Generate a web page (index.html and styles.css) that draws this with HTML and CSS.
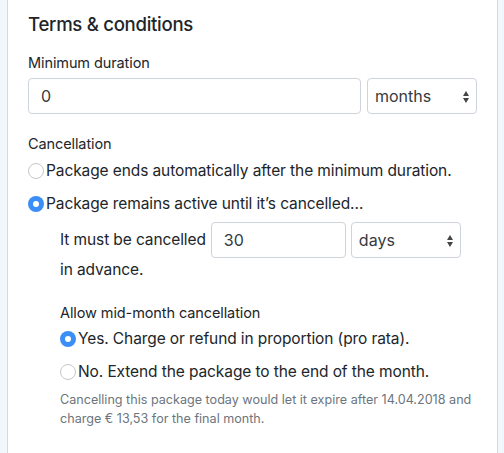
FILE: index.html
```html
<!DOCTYPE html>
<html>
<head>
<meta charset="utf-8">
<link rel="stylesheet" href="styles.css">
</head>
<body>
<div class="card">
  <h2 class="title">Terms &amp; conditions</h2>

  <div class="field">
    <div class="label">Minimum duration</div>
    <div class="row">
      <div class="input wide">0</div>
      <div class="select">months<span class="arrows"></span></div>
    </div>
  </div>

  <div class="field">
    <div class="label">Cancellation</div>
    <div class="radio-row"><span class="radio"></span><span>Package ends automatically after the minimum duration.</span></div>
    <div class="radio-row"><span class="radio on"></span><span>Package remains active until it’s cancelled…</span></div>
  </div>

  <div class="sub">
    <div class="inline">
      <span class="txt">It must be cancelled</span>
      <div class="input small">30</div>
      <div class="select">days<span class="arrows"></span></div>
      <span class="txt full">in advance.</span>
    </div>

    <div class="field2">
      <div class="label">Allow mid-month cancellation</div>
      <div class="radio-row"><span class="radio on"></span><span>Yes. Charge or refund in proportion (pro rata).</span></div>
      <div class="radio-row"><span class="radio"></span><span>No. Extend the package to the end of the month.</span></div>
      <p class="help">Cancelling this package today would let it expire after 14.04.2018 and charge € 13,53 for the final month.</p>
    </div>
  </div>
</div>
</body>
</html>
```

FILE: styles.css
```css
html, body {
  margin: 0;
  padding: 0;
  background: #f2f7fb;
  height: 100%;
}
body {
  font-family: Inter, "Liberation Sans", Arial, sans-serif;
  color: #212529;
}
.card {
  margin: 0 6px 0 7px;
  background: #fff;
  border-left: 1px solid #d6d9dc;
  border-right: 1px solid #d6d9dc;
  padding: 12px 20px 0 20px;
  min-height: 100%;
  box-sizing: border-box;
}
.title {
  margin: 0;
  font-size: 18.6px;
  line-height: 24px;
  font-weight: 500;
  letter-spacing: -0.3px;
}
.field {
  margin-top: 17px;
}
.label {
  font-size: 14.5px;
  line-height: 20px;
  letter-spacing: -0.1px;
}
.row {
  display: flex;
  gap: 6px;
  margin-top: 5px;
}
.input, .select {
  box-sizing: border-box;
  height: 36px;
  border: 1px solid #ced4da;
  border-radius: 4px;
  font-size: 16px;
  line-height: 34px;
  padding: 0 12px;
  color: #343a40;
  background: #fff;
}
.input.wide { flex: 1; }
.input.small { width: 135px; }
.select {
  width: 110px;
  position: relative;
  padding-left: 7px;
}
.arrows {
  position: absolute;
  right: 9px;
  top: 12px;
  width: 0;
  height: 0;
}
.arrows::before, .arrows::after {
  content: "";
  position: absolute;
  left: -4px;
  border-left: 3.5px solid transparent;
  border-right: 3.5px solid transparent;
}
.arrows::before {
  top: 0;
  border-bottom: 5px solid #444;
}
.arrows::after {
  top: 7px;
  border-top: 5px solid #444;
}
.field + .field {
  margin-top: 20px;
}
.field .label + .radio-row {
  margin-top: 5px;
}
.radio-row {
  display: flex;
  align-items: center;
  font-size: 15.5px;
  line-height: 24px;
  gap: 2px;
  letter-spacing: -0.1px;
}
.radio-row + .radio-row {
  margin-top: 9px;
}
.radio {
  box-sizing: border-box;
  width: 16px;
  height: 16px;
  border-radius: 50%;
  border: 1px solid #c7c7c7;
  background: #fff;
  flex: none;
  position: relative;
}
.radio.on {
  border: none;
  background: #3a8ef5;
}
.radio.on::after {
  content: "";
  position: absolute;
  left: 5px;
  top: 5px;
  width: 6px;
  height: 6px;
  border-radius: 50%;
  background: #fff;
}
.sub {
  padding-left: 32px;
}
.inline {
  display: flex;
  flex-wrap: wrap;
  align-items: center;
  column-gap: 5px;
  margin-top: 6px;
  font-size: 15.5px;
  letter-spacing: -0.1px;
}
.inline .input, .inline .select {
  letter-spacing: 0;
}
.inline .txt {
  line-height: 24px;
}
.inline .full {
  flex-basis: 100%;
}
.field2 {
  margin-top: 21px;
}
.field2 .label + .radio-row {
  margin-top: 4px;
}
.help {
  margin: 6px 0 0 0;
  font-size: 12.6px;
  line-height: 19px;
  letter-spacing: 0;
  color: #6c757d;
}
```
